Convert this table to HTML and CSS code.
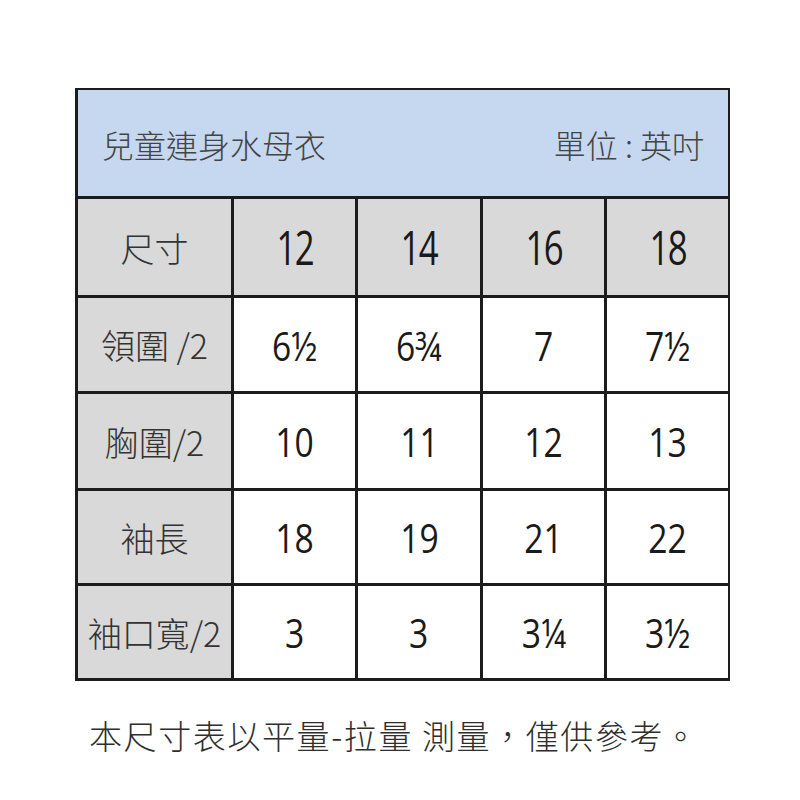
FILE: index.html
```html
<!DOCTYPE html>
<html lang="zh-Hant">
<head>
<meta charset="utf-8">
<link rel="stylesheet" href="styles.css">
</head>
<body>
<div class="page">
  <div class="chart">
    <div class="title">
      <span>兒童連身水母衣</span>
      <span>單位 : 英吋</span>
    </div>
    <div class="cell label">尺寸</div>
    <div class="cell head"><span class="n">12</span></div>
    <div class="cell head"><span class="n">14</span></div>
    <div class="cell head"><span class="n">16</span></div>
    <div class="cell head"><span class="n">18</span></div>

    <div class="cell label">領圍 /2</div>
    <div class="cell"><span class="n">6½</span></div>
    <div class="cell"><span class="n">6¾</span></div>
    <div class="cell"><span class="n">7</span></div>
    <div class="cell"><span class="n">7½</span></div>

    <div class="cell label">胸圍/2</div>
    <div class="cell"><span class="n">10</span></div>
    <div class="cell"><span class="n">11</span></div>
    <div class="cell"><span class="n">12</span></div>
    <div class="cell"><span class="n">13</span></div>

    <div class="cell label">袖長</div>
    <div class="cell"><span class="n">18</span></div>
    <div class="cell"><span class="n">19</span></div>
    <div class="cell"><span class="n">21</span></div>
    <div class="cell"><span class="n">22</span></div>

    <div class="cell label">袖口寬/2</div>
    <div class="cell"><span class="n">3</span></div>
    <div class="cell"><span class="n">3</span></div>
    <div class="cell"><span class="n">3¼</span></div>
    <div class="cell"><span class="n">3½</span></div>
  </div>
  <p class="note">本尺寸表以平量-拉量 測量，僅供參考。</p>
</div>
</body>
</html>
```

FILE: styles.css
```css
html, body {
  margin: 0;
  padding: 0;
  background: #ffffff;
}
.page {
  width: 800px;
  height: 800px;
  padding: 88px 0 0 75px;
  box-sizing: border-box;
  font-family: "Noto Sans CJK TC", "Noto Sans", sans-serif;
  color: #2a2a2a;
}
.chart {
  width: 655px;
  display: grid;
  grid-template-columns: 153px 121px 122px 121px 121px;
  grid-template-rows: 106px 96px 93px 94px 92px 92px;
  gap: 3px;
  padding: 2px 2px 3px 3px;
  box-sizing: border-box;
  background: #1c1c1c;
}
.title {
  grid-column: 1 / -1;
  background: #c6d8ef;
  display: flex;
  justify-content: space-between;
  align-items: center;
  padding: 2px 24px 0 24px;
  font-size: 32px;
  color: #444444;
  font-weight: 300;
}
.cell {
  background: #ffffff;
  display: flex;
  align-items: center;
  justify-content: center;
  font-size: 34px;
  font-weight: 300;
  color: #333333;
}
.label {
  background: #d9d9d9;
}
.head {
  background: #d9d9d9;
}
.n {
  display: inline-block;
  font-family: "Open Sans", "Noto Sans", sans-serif;
  font-weight: 400;
  font-size: 41px;
  color: #1a1a1a;
  transform: scaleX(0.82);
}
.head .n {
  font-size: 47px;
  letter-spacing: -2px;
  transform: scaleX(0.74);
}
.note {
  margin: 30px 0 0 14px;
  font-size: 33px;
  font-weight: 300;
  color: #2e2e2e;
  letter-spacing: 1.6px;
}
```
